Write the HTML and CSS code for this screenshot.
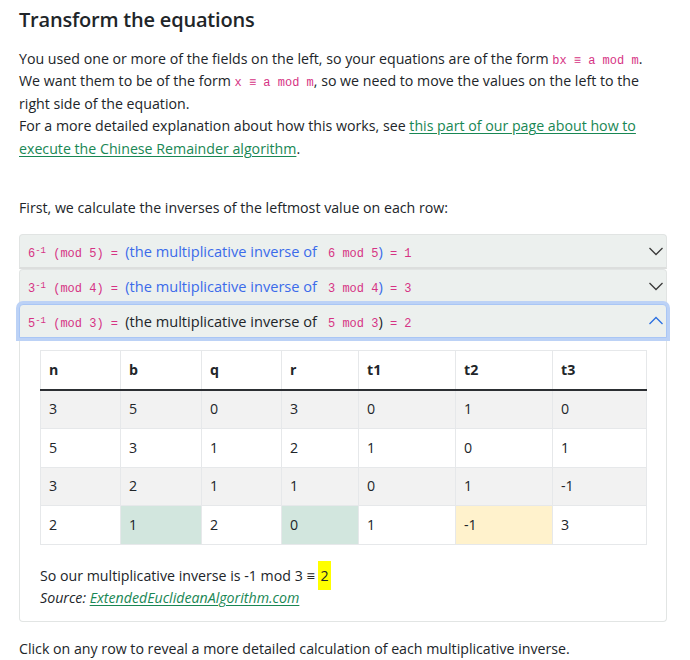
FILE: index.html
```html
<!DOCTYPE html>
<html lang="en">
<head>
<meta charset="utf-8">
<title>Transform the equations</title>
<link rel="stylesheet" href="styles.css">
</head>
<body>
<main class="page">
  <h2 class="title">Transform the equations</h2>
  <p class="intro">You used one or more of the fields on the left, so your equations are of the form <code>bx ≡ a mod m</code>.<br>
  We want them to be of the form <code>x ≡ a mod m</code>, so we need to move the values on the left to the right side of the equation.<br>
  For a more detailed explanation about how this works, see <a href="#">this part of our page about how to execute the Chinese Remainder algorithm</a>.</p>

  <p class="lead-in">First, we calculate the inverses of the leftmost value on each row:</p>

  <div class="accordion">
    <div class="acc-item">
      <button class="acc-head">
        <span class="acc-text"><code>6<sup>-1</sup> (mod 5) = </code><span class="paren">(the multiplicative inverse of </span><code> 6 mod 5</code><span class="paren">)</span><code> = 1</code></span>
        <svg class="chev" viewBox="0 0 16 16" width="16" height="16"><path d="M1.5 5 L8 11.5 L14.5 5" fill="none" stroke="currentColor" stroke-width="1.3"/></svg>
      </button>
    </div>
    <div class="acc-item">
      <button class="acc-head">
        <span class="acc-text"><code>3<sup>-1</sup> (mod 4) = </code><span class="paren">(the multiplicative inverse of </span><code> 3 mod 4</code><span class="paren">)</span><code> = 3</code></span>
        <svg class="chev" viewBox="0 0 16 16" width="16" height="16"><path d="M1.5 5 L8 11.5 L14.5 5" fill="none" stroke="currentColor" stroke-width="1.3"/></svg>
      </button>
    </div>
    <div class="acc-item open">
      <button class="acc-head active">
        <span class="acc-text"><code>5<sup>-1</sup> (mod 3) = </code><span class="paren">(the multiplicative inverse of </span><code> 5 mod 3</code><span class="paren">)</span><code> = 2</code></span>
        <svg class="chev" viewBox="0 0 16 16" width="16" height="16"><path d="M1.5 11 L8 4.5 L14.5 11" fill="none" stroke="currentColor" stroke-width="1.3"/></svg>
      </button>
      <div class="acc-body">
        <table class="euclid">
          <thead>
            <tr><th>n</th><th>b</th><th>q</th><th>r</th><th>t1</th><th>t2</th><th>t3</th></tr>
          </thead>
          <tbody>
            <tr class="striped"><td>3</td><td>5</td><td>0</td><td>3</td><td>0</td><td>1</td><td>0</td></tr>
            <tr><td>5</td><td>3</td><td>1</td><td>2</td><td>1</td><td>0</td><td>1</td></tr>
            <tr class="striped"><td>3</td><td>2</td><td>1</td><td>1</td><td>0</td><td>1</td><td>-1</td></tr>
            <tr><td>2</td><td class="ok">1</td><td>2</td><td class="ok">0</td><td>1</td><td class="warn">-1</td><td>3</td></tr>
          </tbody>
        </table>
        <p class="result">So our multiplicative inverse is -1 mod 3 ≡ <mark>2</mark><br>
        <em>Source: <a href="#">ExtendedEuclideanAlgorithm.com</a></em></p>
      </div>
    </div>
  </div>

  <p class="outro">Click on any row to reveal a more detailed calculation of each multiplicative inverse.</p>
</main>
</body>
</html>
```

FILE: styles.css
```css
* { box-sizing: border-box; }
html, body { margin: 0; padding: 0; background: #fff; }
body {
  font-family: "Open Sans", "Noto Sans", sans-serif;
  font-size: 14.2px;
  line-height: 22.4px;
  color: #212529;
}
.page { padding: 0 23px 0 19px; }
.title {
  margin: 0;
  padding-top: 7px;
  font-size: 20px;
  line-height: 26px;
  font-weight: 600;
  letter-spacing: -0.2px;
}
.intro { margin: 15px 0 0; }
code {
  font-family: "Liberation Mono", "DejaVu Sans Mono", monospace;
  font-size: 12px;
  line-height: 1;
  color: #d63384;
}
a { color: #198754; text-decoration: underline; text-underline-offset: 2px; }
.lead-in { margin: 37px 0 0; }
.accordion { margin-top: 15px; }
.acc-head {
  display: flex;
  align-items: center;
  justify-content: space-between;
  width: 100%;
  height: 35px;
  padding: 0 2px 0 8px;
  background: #ecf0ee;
  border: 1px solid #e1e4e3;
  border-bottom: 2px solid #dcdedd;
  border-radius: 4px 4px 0 0;
  font: inherit;
  color: #212529;
  text-align: left;
}
.acc-text { white-space: pre; }
.acc-text sup { font-size: 9px; vertical-align: 4px; line-height: 0; }
.paren { color: #3b6bea; font-size: 14.6px; }
.chev { color: #3a3a3a; }
.acc-head.active {
  height: 34px;
  border: 1px solid #a9c6f5;
  box-shadow: 0 0 0 3px #bcd2f6;
  position: relative;
  z-index: 1;
}
.acc-head.active .paren { color: #212529; }
.acc-head.active .chev { color: #2b70e0; }
.acc-body {
  border: 1px solid #e2e5e4;
  border-top: none;
  border-radius: 0 0 4px 4px;
  padding: 13px 19px 1px 20px;
  margin-top: -1px;
}
.euclid {
  width: 100%;
  border-collapse: collapse;
  border: 1px solid #e6e8ea;
}
.euclid th, .euclid td {
  border: 1px solid #e6e8ea;
  text-align: left;
  padding: 0 8px;
  height: 38.6px;
}
.euclid th { font-weight: 700; border-bottom: 2px solid #2c2f33; height: 39px; }
.euclid th:nth-child(1) { width: 80px; }
.euclid th:nth-child(2) { width: 81px; }
.euclid th:nth-child(3) { width: 80px; }
.euclid th:nth-child(4) { width: 77px; }
.euclid th:nth-child(5) { width: 97px; }
.euclid th:nth-child(6) { width: 97px; }
.euclid tr.striped td { background: #f2f2f2; }
.euclid td.ok { background: #d2e6de; }
.euclid td.warn { background: #fff2cc; }
.result { margin: 20px 0 10px; }
mark { background: #ffff00; color: #212529; padding: 5px 2px; }
.outro { margin: 16px 0 0; }
```
